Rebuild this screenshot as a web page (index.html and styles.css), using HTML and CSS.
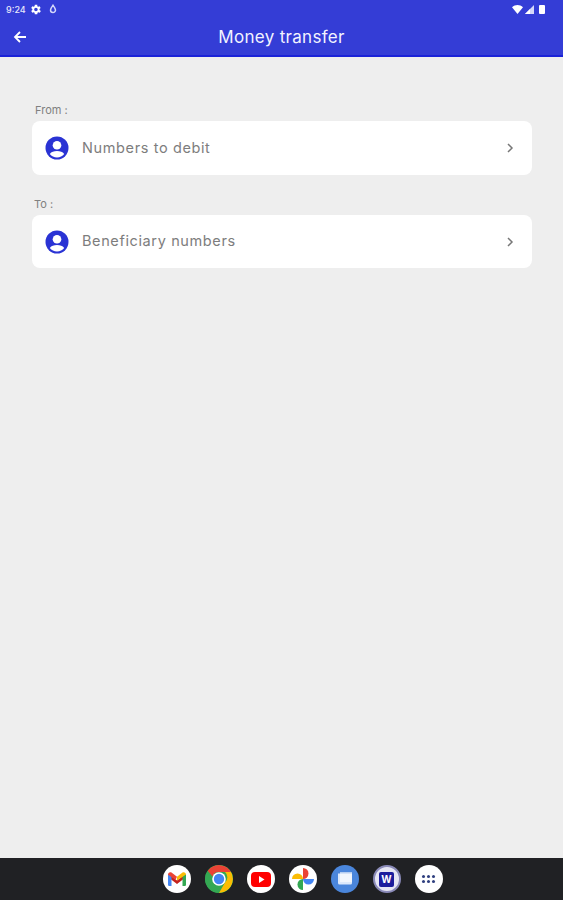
FILE: index.html
```html
<!DOCTYPE html>
<html lang="en">
<head>
  <meta charset="UTF-8">
  <meta name="viewport" content="width=device-width, initial-scale=1.0">
  <title>Money transfer</title>
  <link rel="stylesheet" href="styles.css">
</head>

<body>
  <div class="app">
    <header class="top-bar">
      <div class="status-bar">
        <div class="status-left">
          <span class="clock">9:24</span>
          <svg class="gear" width="13" height="13" viewBox="0 0 24 24"><path fill="#fff" fill-rule="evenodd" d="M19.400 13a7.500 7.500 0 0 0 0-2l2.100-1.600-2-3.500-2.500 1a7.500 7.500 0 0 0-1.700-1L15.300 3.300h-4.600l-.4 2.600a7.500 7.500 0 0 0-1.700 1l-2.500-1-2 3.500L6.200 11a7.500 7.500 0 0 0 0 2l-2.100 1.600 2 3.500 2.500-1a7.500 7.500 0 0 0 1.700 1l.4 2.600h4.600l.4-2.600a7.500 7.500 0 0 0 1.700-1l2.500 1 2-3.500zM12.800 15.300a3.300 3.300 0 1 1 0-6.600 3.300 3.300 0 0 1 0 6.600z"/></svg>
          <svg class="drop" width="8" height="10" viewBox="0 0 8 10"><path fill="none" stroke="#d5d8fa" stroke-width="1.500" d="M4 1.200C5.500 3.200 6.500 4.500 6.500 6a2.500 2.500 0 0 1-5 0C1.500 4.500 2.500 3.200 4 1.200z"/></svg>
        </div>
        <div class="status-right">
          <svg width="11" height="9" viewBox="0 0 11 9"><path fill="#fff" d="M0 2.200C3.200-.6 7.800-.6 11 2.200L5.500 9z"/></svg>
          <svg width="9" height="9" viewBox="0 0 9 9"><path fill="#d5d8fa" d="M9 0v9H0z"/><path fill="#fff" d="M5 4v5H0z"/></svg>
          <span class="battery"></span>
        </div>
      </div>
      <div class="title-row">
        <svg class="back" width="14" height="14" viewBox="0 0 14 14"><path fill="none" stroke="#fff" stroke-width="1.800" d="M13 7H2.500M7 2 2 7l5 5"/></svg>
        <h1>Money transfer</h1>
      </div>
    </header>

    <main class="content">
      <div class="label">From :</div>
      <div class="picker">
        <svg class="avatar" width="24" height="24" viewBox="0 0 24 24"><circle cx="12" cy="12" r="11.500" fill="#2a33d4"/><circle cx="12" cy="9.300" r="4.300" fill="#fff"/><path fill="#fff" d="M4.800 18c1.600-2.400 4-3.100 7.200-3.100s5.600.7 7.200 3.100c-1.700 2.100-4.300 3.600-7.200 3.600S6.500 20.100 4.800 18z"/></svg>
        <span class="picker-text">Numbers to debit</span>
        <svg class="chevron" width="8" height="12" viewBox="0 0 8 12"><path fill="none" stroke="#777" stroke-width="1.500" d="m2 2 4 4-4 4"/></svg>
      </div>
      <div class="label label-to">To :</div>
      <div class="picker picker-to">
        <svg class="avatar" width="24" height="24" viewBox="0 0 24 24"><circle cx="12" cy="12" r="11.500" fill="#2a33d4"/><circle cx="12" cy="9.300" r="4.300" fill="#fff"/><path fill="#fff" d="M4.800 18c1.600-2.400 4-3.100 7.200-3.100s5.600.7 7.200 3.100c-1.700 2.100-4.300 3.600-7.200 3.600S6.500 20.100 4.800 18z"/></svg>
        <span class="picker-text">Beneficiary numbers</span>
        <svg class="chevron" width="8" height="12" viewBox="0 0 8 12"><path fill="none" stroke="#777" stroke-width="1.500" d="m2 2 4 4-4 4"/></svg>
      </div>
    </main>

    <footer class="dock">
      <div class="dock-icon white">
        <svg width="20" height="16" viewBox="0 0 20 16"><path fill="#c5221f" d="M1.500 3 10 9.500 18.500 3v3.500L10 13 1.500 6.500z"/><path fill="#4285f4" d="M1 3.500h3.500V15H2.300A1.300 1.300 0 0 1 1 13.700z"/><path fill="#34a853" d="M15.500 3.500H19v10.200a1.300 1.300 0 0 1-1.300 1.300h-2.200z"/><path fill="#ea4335" d="M1 3.500C1 1.500 3 .5 4.500 1.600L10 5.800l-1.500 3-7.500-5z"/><path fill="#fbbc04" d="M19 3.500c0-2-2-3-3.500-1.900L10 5.800v3.700l9-5.900z"/></svg>
      </div>
      <div class="dock-icon chrome">
        <svg width="28" height="28" viewBox="0 0 28 28"><circle cx="14" cy="14" r="14" fill="#34a853"/><path fill="#ea4335" d="M14 0a14 14 0 0 1 12.100 7H14a7 7 0 0 0-6.500 4.400L2.600 5.800A14 14 0 0 1 14 0z"/><path fill="#fbbc04" d="M26.100 7A14 14 0 0 1 14 28l6-10.500A7 7 0 0 0 20 7z"/><circle cx="14" cy="14" r="6.800" fill="#fff"/><circle cx="14" cy="14" r="5.200" fill="#4285f4"/></svg>
      </div>
      <div class="dock-icon white">
        <svg width="20" height="15" viewBox="0 0 20 15"><rect width="20" height="15" rx="4" fill="#f00"/><path fill="#fff" d="m8 4 5.500 3.500L8 11z"/></svg>
      </div>
      <div class="dock-icon white">
        <svg width="24" height="24" viewBox="0 0 24 24"><path fill="#fbbc04" d="M12 12H1a5.500 5.500 0 0 1 11 0z"/><path fill="#ea4335" d="M12 12V1a5.500 5.500 0 0 1 0 11z"/><path fill="#4285f4" d="M12 12h11a5.500 5.500 0 0 1-11 0z"/><path fill="#34a853" d="M12 12v11a5.500 5.500 0 0 1 0-11z"/></svg>
      </div>
      <div class="dock-icon messages">
        <svg width="16" height="14" viewBox="0 0 16 14"><path fill="#dbe8fb" d="M1 1.500h14V11a1.500 1.500 0 0 1-1.500 1.500h-11A1.500 1.500 0 0 1 1 11z"/><path fill="#fff" d="M3 0h12v10H3z" opacity=".6"/></svg>
      </div>
      <div class="dock-icon wave">
        <span class="wave-box">W</span>
      </div>
      <div class="dock-icon white">
        <div class="dots"><i></i><i></i><i></i><i></i><i></i><i></i></div>
      </div>
    </footer>
  </div>
</body>
</html>
```

FILE: styles.css
```css
* {
  box-sizing: border-box;
}
body {
  margin: 0;
  font-family: "Inter", "Liberation Sans", sans-serif;
  background: #eeeeee;
}
.app {
  width: 563px;
  height: 900px;
  display: flex;
  flex-direction: column;
}
.top-bar {
  height: 57px;
  background: #343dd6;
  border-bottom: 2px solid #1a22d8;
  color: #fff;
  flex-shrink: 0;
}
.status-bar {
  height: 18px;
  padding: 0 18px 0 6px;
  display: flex;
  align-items: center;
  justify-content: space-between;
}
.status-left {
  display: flex;
  align-items: center;
}
.clock {
  font-size: 9px;
  font-weight: 500;
  color: #e6e7fb;
}
.gear {
  margin-left: 3px;
}
.drop {
  margin-left: 7px;
}
.status-right {
  display: flex;
  align-items: center;
  gap: 2px;
}
.battery {
  width: 6px;
  height: 9px;
  margin-left: 3px;
  background: #fff;
  border-radius: 1px;
}
.title-row {
  height: 37px;
  display: flex;
  align-items: center;
  justify-content: center;
  position: relative;
}
.back {
  position: absolute;
  left: 13px;
  top: 12px;
}
.title-row h1 {
  margin: 0;
  padding-top: 1px;
  font-size: 17px;
  font-weight: 400;
  letter-spacing: 0.3px;
  color: #f2f3ff;
}
.content {
  flex: 1;
  padding: 46px 31px 0 32px;
}
.label {
  height: 18px;
  padding-left: 3px;
  font-size: 11px;
  line-height: 14px;
  color: #808080;
}
.label-to {
  margin-top: 22px;
  padding-left: 2px;
}
.picker {
  height: 54px;
  background: #fff;
  border-radius: 8px;
  display: flex;
  align-items: center;
  padding: 0 18px 0 13px;
}
.picker-to {
  height: 53px;
}
.picker-text {
  flex: 1;
  margin-left: 13px;
  padding-bottom: 2px;
  font-size: 14.5px;
  letter-spacing: 0.62px;
  color: #7d7d7d;
}
.dock {
  height: 42px;
  flex-shrink: 0;
  background: #202124;
  display: flex;
  align-items: center;
  justify-content: center;
  gap: 14px;
  padding-left: 42px;
}
.dock-icon {
  width: 28px;
  height: 28px;
  border-radius: 50%;
  display: flex;
  align-items: center;
  justify-content: center;
  overflow: hidden;
}
.white {
  background: #fff;
}
.chrome {
  background: #34a853;
}
.messages {
  background: #4a86dc;
}
.wave {
  background: #e6e6f4;
  border: 2px solid #8a8ab8;
}
.wave-box {
  width: 15px;
  height: 15px;
  border-radius: 2px;
  background: #1c1c9c;
  color: #fff;
  font-size: 10px;
  font-weight: 700;
  line-height: 15px;
  text-align: center;
}
.dots {
  display: grid;
  grid-template-columns: repeat(3, 3px);
  gap: 2px;
}
.dots i {
  width: 3px;
  height: 3px;
  border-radius: 50%;
  background: #2f3f7f;
}
```
